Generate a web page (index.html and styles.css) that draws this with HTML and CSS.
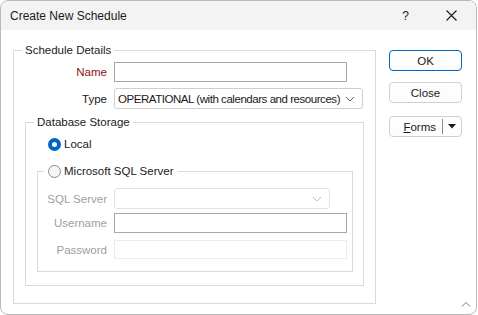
FILE: index.html
```html
<html>

<head>
    <title>Create New Schedule</title>
    <link rel="stylesheet" href="styles.css">
</head>

<body>
    <div class="window">
        <div class="titlebar">
            <span class="title">Create New Schedule</span>
            <span class="help">?</span>
            <svg class="close-x" width="11" height="11" viewBox="0 0 11 11">
                <path d="M0.5 0.5 L10.5 10.5 M10.5 0.5 L0.5 10.5" stroke="#1a1a1a" stroke-width="1.1" fill="none"/>
            </svg>
        </div>
        <div class="content">
            <fieldset class="group group-main">
                <legend>Schedule Details</legend>
                <div class="rows rows-main">
                    <label class="req">Name</label>
                    <div class="field field-name"></div>
                    <label>Type</label>
                    <div class="combo combo-type">
                        <span class="combo-text">OPERATIONAL (with calendars and resources)</span>
                        <svg width="10" height="6" viewBox="0 0 10 6"><path d="M1 1 L5 5 L9 1" stroke="#606060" fill="none"/></svg>
                    </div>
                </div>
                <fieldset class="group group-db">
                    <legend>Database Storage</legend>
                    <div class="radio-row">
                        <span class="radio checked"></span>
                        <span>Local</span>
                    </div>
                    <fieldset class="group group-sql">
                        <legend class="radio-row">
                            <span class="radio"></span>
                            <span>Microsoft SQL Server</span>
                        </legend>
                        <div class="rows rows-sql">
                            <label class="off">SQL Server</label>
                            <div class="combo combo-sql">
                                <span></span>
                                <svg width="10" height="6" viewBox="0 0 10 6"><path d="M1 1 L5 5 L9 1" stroke="#c0c0c0" fill="none"/></svg>
                            </div>
                            <label class="off">Username</label>
                            <div class="field field-user"></div>
                            <label class="off pass">Password</label>
                            <div class="field field-pass pass"></div>
                        </div>
                    </fieldset>
                </fieldset>
            </fieldset>
            <div class="buttons">
                <button class="btn btn-default">OK</button>
                <button class="btn">Close</button>
                <div class="btn btn-split">
                    <span class="split-label"><u>F</u>orms</span>
                    <span class="split-sep"></span>
                    <svg width="8" height="5" viewBox="0 0 8 5"><path d="M0 0 L8 0 L4 4.5 Z" fill="#1a1a1a"/></svg>
                </div>
            </div>
        </div>
        <svg class="grip" width="10" height="6" viewBox="0 0 10 6">
            <path d="M1 5.5 L5 1.5 L9 5.5" stroke="#7a7a7a" stroke-width="1" fill="none"/>
        </svg>
    </div>
</body>

</html>
```

FILE: styles.css
```css
* {
    font-family: "Liberation Sans", Arial, sans-serif;
    font-size: 11.5px;
    box-sizing: border-box;
}

html, body {
    margin: 0;
    padding: 0;
    background: #ffffff;
}

.window {
    position: relative;
    width: 477px;
    height: 315px;
    border: 1px solid #b9b9b9;
    border-radius: 8px;
    overflow: hidden;
    color: #1a1a1a;
}

.titlebar {
    height: 29px;
    background: #f3f3f3;
    display: flex;
    align-items: center;
    padding-left: 9px;
}

.title {
    flex: 1;
    font-size: 12px;
}

.help {
    font-size: 12px;
    margin-right: 37px;
}

.close-x {
    margin-right: 19px;
}

.content {
    display: flex;
    padding: 12px 0 0 12px;
}

.group {
    margin: 0;
    padding: 0;
    border: 1px solid #dadada;
}

.group legend {
    padding: 0 3px;
    margin-left: 8px;
    line-height: 16px;
    height: 16px;
}

.group-main {
    width: 363px;
    height: 262px;
}

.rows {
    display: grid;
    align-items: center;
    column-gap: 7px;
}

.rows label {
    text-align: right;
    white-space: nowrap;
}

.rows-main {
    grid-template-columns: 93px 249px;
    row-gap: 6px;
    padding-top: 4px;
}

.rows-sql {
    grid-template-columns: 69px auto;
    row-gap: 4px;
    padding-top: 9px;
}

.rows-sql .pass {
    margin-top: 3px;
}

.req {
    color: #8b1010;
}

.off {
    color: #a0a0a0;
}

.field {
    height: 20px;
    border: 1px solid #a8a8a8;
}

.field-name, .field-user {
    width: 233px;
}

.field-pass {
    width: 233px;
    height: 19px;
    border-color: #ececec;
}

.combo {
    height: 21px;
    border: 1px solid #cfcfcf;
    border-radius: 3px;
    display: flex;
    align-items: center;
    justify-content: space-between;
    padding: 0 7px 0 3px;
    white-space: nowrap;
}

.combo-text {
    letter-spacing: -0.45px;
}

.combo-type {
    width: 249px;
}

.combo-sql {
    width: 216px;
    border-color: #e2e2e2;
}

.group-db {
    margin: 5px 0 0 11px;
    width: 339px;
    height: 172px;
}

.radio-row {
    display: flex;
    align-items: center;
    gap: 3px;
}

.group-db > .radio-row {
    margin: 6px 0 0 22px;
    height: 16px;
}

.radio {
    width: 13px;
    height: 13px;
    border-radius: 50%;
    border: 1px solid #8a8a8a;
    background: #f6f6f6;
}

.radio.checked {
    border: 4px solid #0067c0;
    background: #ffffff;
}

.group-sql {
    margin: 11px 0 0 11px;
    width: 316px;
    height: 109px;
}

.group-sql legend {
    margin-left: 6px;
    padding: 0 4px;
}

.buttons {
    display: flex;
    flex-direction: column;
    margin-left: 13px;
    margin-top: 8px;
}

.btn {
    width: 73px;
    height: 21px;
    border: 1px solid #d0d0d0;
    border-radius: 4px;
    background: #fdfdfd;
    color: #1a1a1a;
    padding: 0;
    margin-bottom: 11px;
}

.btn-default {
    border-color: #0067c0;
}

.btn-split {
    margin-top: 2px;
    display: flex;
    align-items: center;
    justify-content: flex-end;
    padding-right: 5px;
}

.split-sep {
    width: 1px;
    height: 15px;
    background: #8a8a8a;
    margin: 0 5px 0 6px;
}

.grip {
    position: absolute;
    right: 5px;
    bottom: 7px;
}
```
